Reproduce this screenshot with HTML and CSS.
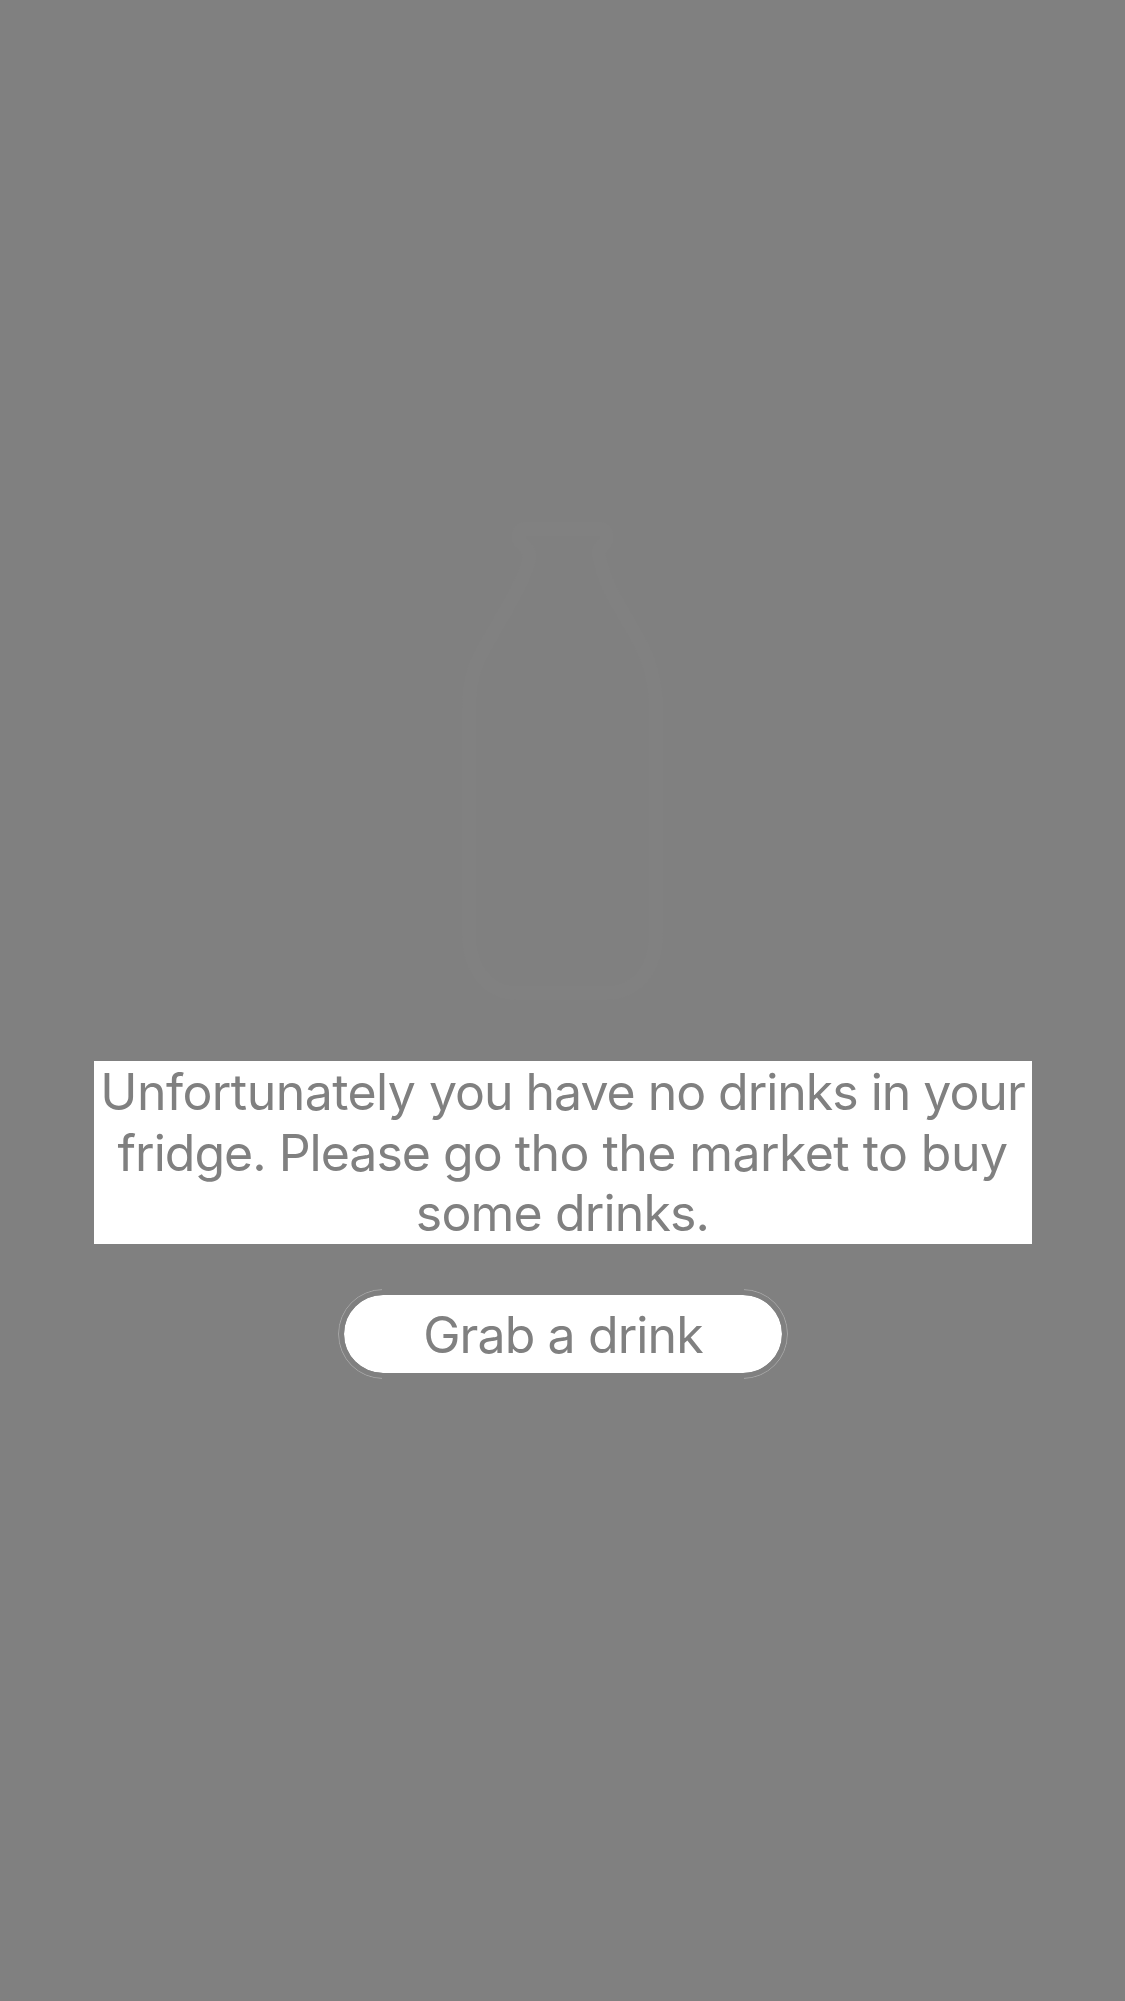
FILE: index.html
```html
<!DOCTYPE html>
<html lang="en">
<head>
<meta charset="utf-8">
<title>Fridge</title>
<link rel="stylesheet" href="styles.css">
</head>
<body>
<main class="empty">
<svg class="bottle" viewBox="0 0 240 500" aria-hidden="true">
<path d="M84 18H161C167 18 169 29 163 34C157 39 158 43 161 53C166 75 177 91 188 110C203 136 216 158 216 199V422C216 459 196 482 166 482H78C48 482 29 459 29 422V199C29 158 40 145 53 122C66 98 80 78 87 56C91 44 90 40 83 34C76 28 78 18 84 18Z"/>
</svg>
<p class="message"><span class="line first"><span class="loose">Unfortunately </span>you have no drinks in your</span> <span class="line second"><span class="tight">fridge. Please go </span>tho the market to buy</span> <span class="line third">some drinks.</span></p>
<button class="grab">Grab a drink</button>
</main>
</body>
</html>
```
FILE: styles.css
```css
body {
  margin: 0;
  background: #808080;
  color: #808080;
  font-family: Inter, "Liberation Sans", sans-serif;
}

.empty {
  display: flex;
  flex-direction: column;
  align-items: center;
  box-sizing: border-box;
  height: 2001px;
  padding-top: 511px;
}

.bottle {
  width: 240px;
  height: 500px;
  margin-right: 5px;
  fill: none;
  stroke: #818181;
  stroke-width: 14;
}

.message {
  box-sizing: border-box;
  width: 938px;
  height: 183px;
  margin: 50px 0 45px;
  padding-top: 1px;
  background: #fff;
  font-size: 50px;
  line-height: 61px;
  text-align: center;
}

.line {
  display: block;
  white-space: nowrap;
}

.first {
  letter-spacing: -1.03px;
}

.loose {
  letter-spacing: -0.56px;
}

.second {
  letter-spacing: -0.57px;
}

.tight {
  letter-spacing: -1px;
}

.third {
  margin-top: -1px;
  letter-spacing: -0.85px;
}

.grab {
  position: relative;
  box-sizing: border-box;
  width: 450px;
  height: 90px;
  padding: 2px 0 0;
  border: 6px solid #808080;
  border-radius: 45px;
  background: #fff;
  background-clip: padding-box;
  color: inherit;
  font: 50px/76px Inter, "Liberation Sans", sans-serif;
  letter-spacing: -0.9px;
  text-indent: 1px;
}

/* Hairline highlight around the rounded ends */
.grab::after {
  content: "";
  position: absolute;
  inset: -6px;
  border: 1px solid rgba(255, 255, 255, 0.3);
  border-radius: 45px;
  mask-image: linear-gradient(to right, #000 44px, transparent 44px, transparent calc(100% - 44px), #000 calc(100% - 44px));
}
```
